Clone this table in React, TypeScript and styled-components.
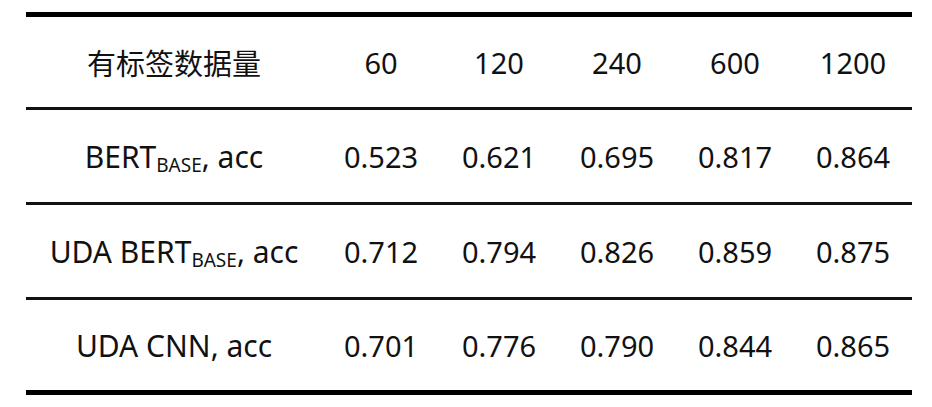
import React from "react";
import styled, { createGlobalStyle } from "styled-components";

const GlobalStyle = createGlobalStyle`
  html, body {
    margin: 0;
    padding: 0;
    background: #ffffff;
  }
  body {
    font-family: "Noto Sans", "Noto Sans CJK SC", sans-serif;
    color: #111;
  }
`;

const Page = styled.div`
  width: 932px;
  height: 407px;
  padding: 12px 20px 0 26px;
  box-sizing: border-box;
`;

const Table = styled.div`
  width: 886px;
  border-top: 5px solid #000;
  border-bottom: 5px solid #000;
  font-size: 29px;
`;

const Row = styled.div<{ $h: number }>`
  display: grid;
  grid-template-columns: 296px repeat(5, 1fr);
  align-items: center;
  height: ${(p) => p.$h}px;
  & + & {
    border-top: 3px solid #111;
  }
`;

const LabelCell = styled.div<{ $latin?: boolean }>`
  text-align: center;
  white-space: nowrap;
  font-size: ${(p) => (p.$latin ? "30px" : "29px")};
`;

const ValueCell = styled.div`
  text-align: center;
`;

const Sub = styled.sub`
  font-size: 19px;
  vertical-align: -4px;
  line-height: 0;
`;

const BertBase = () => (
  <>
    BERT<Sub>BASE</Sub>
  </>
);

const sizes = ["60", "120", "240", "600", "1200"];

const rows: { label: React.ReactNode; values: string[]; h: number }[] = [
  { label: <><BertBase />, acc</>, values: ["0.523", "0.621", "0.695", "0.817", "0.864"], h: 92 },
  { label: <>UDA <BertBase />, acc</>, values: ["0.712", "0.794", "0.826", "0.859", "0.875"], h: 92 },
  { label: <>UDA CNN, acc</>, values: ["0.701", "0.776", "0.790", "0.844", "0.865"], h: 90 },
];

export default function App() {
  return (
    <Page>
      <GlobalStyle />
      <Table>
        <Row $h={90}>
          <LabelCell>有标签数据量</LabelCell>
          {sizes.map((s) => (
            <ValueCell key={s}>{s}</ValueCell>
          ))}
        </Row>
        {rows.map((r, i) => (
          <Row $h={r.h} key={i}>
            <LabelCell $latin>{r.label}</LabelCell>
            {r.values.map((v, j) => (
              <ValueCell key={j}>{v}</ValueCell>
            ))}
          </Row>
        ))}
      </Table>
    </Page>
  );
}
